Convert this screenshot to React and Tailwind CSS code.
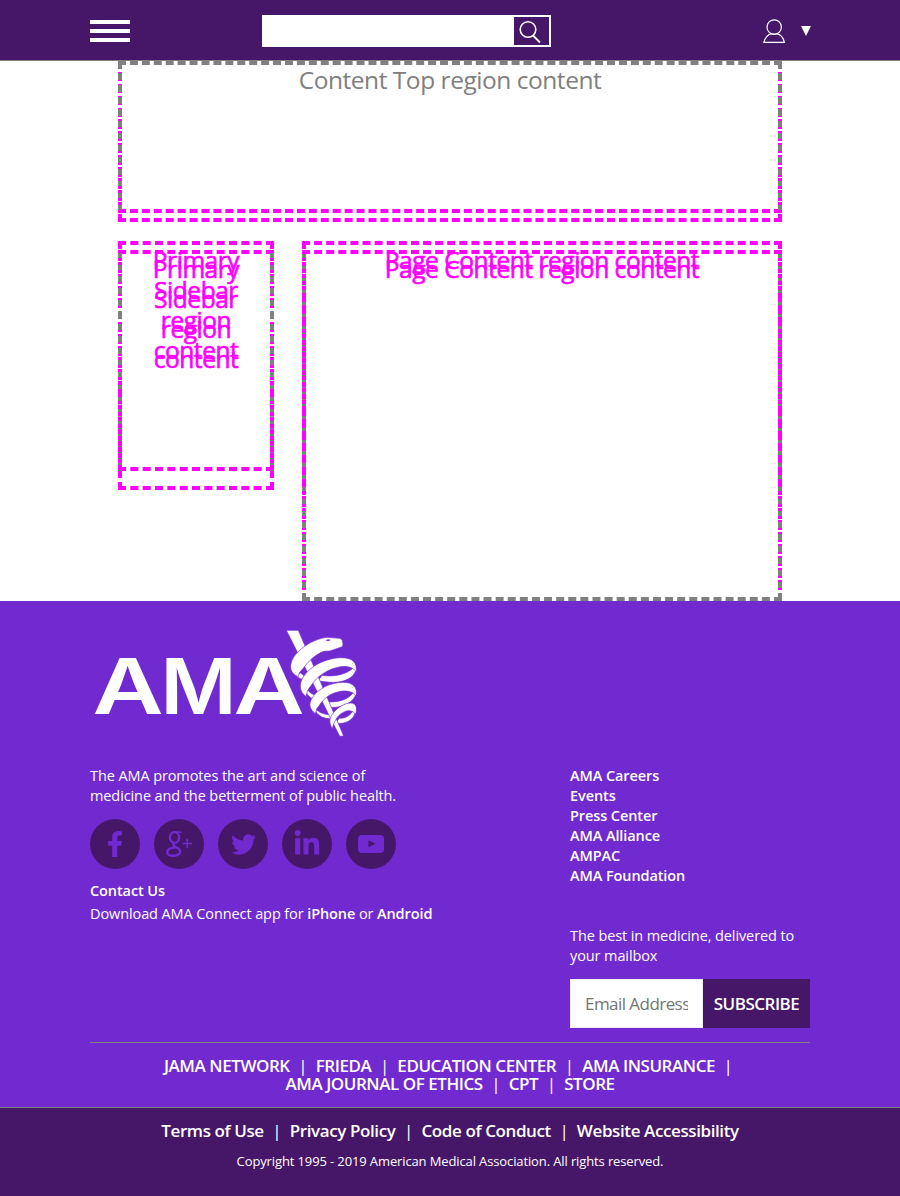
import React from "react";
import { FaFacebookF, FaTwitter, FaLinkedinIn } from "react-icons/fa";

const MAGENTA = "#ff00ff";

// Pitch of an evenly spread dashed line with 8px dashes.
function pitchOf(length) {
  const few = Math.floor((length + 4) / 12);
  const gapFew = (length - few * 8) / (few - 1);
  const gapMany = (length - (few + 1) * 8) / few;
  return 8 + (Math.abs(gapFew - 4) <= Math.abs(gapMany - 4) ? gapFew : gapMany);
}

// Share of the pixel row y that is covered by a dash of the line.
function coverage(y, [top, bottom]) {
  if (y < top || y >= bottom) return 0;
  const pitch = pitchOf(bottom - top);
  let sum = 0;
  for (let k = Math.floor((y - top) / pitch); k <= Math.floor((y + 1 - top) / pitch); k++) {
    const start = top + k * pitch;
    sum += Math.max(0, Math.min(y + 1, start + 8) - Math.max(y, start));
  }
  return Math.min(1, sum);
}

// Gradient for a vertical edge shared by two dashed boxes: gray where both
// agree, magenta where they differ.
function edgeGradient(a, b, height) {
  const stops = [];
  for (let y = 0; y < height; y++) {
    const ca = coverage(y, a);
    const cb = coverage(y, b);
    const color = Math.abs(ca - cb) > 0.12 ? MAGENTA : `rgba(128,128,128,${cb.toFixed(2)})`;
    stops.push(`${color} ${y}px ${y + 1}px`);
  }
  return `linear-gradient(${stops.join(",")})`;
}

function Edges({ a, b, height }) {
  const style = { backgroundImage: edgeGradient(a, b, height) };
  return (
    <>
      <div className="absolute inset-y-0 left-0 w-1" style={style} />
      <div className="absolute inset-y-0 right-0 w-1" style={style} />
    </>
  );
}

function Rule({ className }) {
  return <div className={`absolute inset-x-0 h-2 border-dashed ${className}`} />;
}

function GhostText({ children, className }) {
  return (
    <div className={`absolute inset-x-0 text-center text-[#ff00ff] [-webkit-text-stroke:0.6px_#ff00ff] ${className}`}>
      {children}
    </div>
  );
}

const REGION = "text-[24.5px] leading-[30px] tracking-[-0.46px]";

function Logo() {
  return (
    <svg className="block h-[115px] w-[275px]" viewBox="0 0 275 115" fill="#fff">
      <g fontFamily="Inter, sans-serif" fontWeight="600" fontSize="77">
        <text x="2.5" y="88.5" textLength="71" lengthAdjust="spacingAndGlyphs">A</text>
        <text x="70.5" y="88.5" textLength="76" lengthAdjust="spacingAndGlyphs">M</text>
        <text x="143.5" y="88.5" textLength="71" lengthAdjust="spacingAndGlyphs">A</text>
      </g>
      <g transform="translate(190 0) scale(0.33333)" stroke="#7129d0" strokeWidth="2">
        <path d="M46 146 L62 144 L82 160 Q60 168 46 150Z" />
        <path d="M228 130 C226 160 190 174 150 172 L114 168 L126 151 C160 156 200 150 222 126Z" />
        <path d="M76 200 Q90 224 114 226 L108 211 Q92 208 84 196Z" />
        <path d="M228 204 C224 233 185 250 148 247 L136 230 C170 233 205 226 222 200Z" />
        <path d="M104 256 Q120 282 154 282 L154 269 Q128 270 112 256Z" />
        <path d="M228 254 C224 288 190 300 168 294 L178 279 C195 282 212 272 222 252Z" />
        <path d="M19 16 L55 16 L191 333 L179 334Z" />
        <path d="M140 37 L180 40 Q189 43 189 58 L187 65 L150 78 L132 79 C106 88 84 110 68 132 Q54 144 55 155 C34 148 28 130 34 112 C42 82 90 44 140 37Z" />
        <path d="M79 215 C58 202 56 178 69 157 C90 122 140 98 185 98 C217 98 234 113 228 142 C222 128 205 123 183 125 C146 130 110 154 93 182 Q78 198 79 215Z" />
        <path d="M107 267 C88 252 86 238 95 221 C112 192 150 172 190 172 C219 172 234 187 228 214 C222 200 200 196 183 199 C154 204 132 218 119 240 Q106 252 107 267Z" />
        <path d="M157 311 C145 291 149 278 159 265 C172 247 195 234 212 234 C230 235 232 250 227 268 C218 256 205 255 194 260 C175 268 163 285 157 311Z" />
        <path d="M138 46 Q146 41 151 45 Q145 50 138 46Z" fill="#7129d0" strokeWidth="1" />
      </g>
    </svg>
  );
}

function Social({ children }) {
  return (
    <a className="flex size-[50px] items-center justify-center rounded-full bg-[#461669] text-[#7129d0]">{children}</a>
  );
}

function LinkRow({ items, trailing, className }) {
  return (
    <div className={`flex justify-center whitespace-nowrap leading-[18px] ${className}`}>
      {items.map((t, i) => (
        <React.Fragment key={t}>
          <a className="font-semibold">{t}</a>
          {(i < items.length - 1 || trailing) && <span className="w-[26px] text-center">|</span>}
        </React.Fragment>
      ))}
    </div>
  );
}

export default function App() {
  return (
    <div className="h-[1196px] w-[900px] overflow-hidden bg-white font-['Open_Sans','Noto_Sans',sans-serif]">
      <header className="flex h-[61px] border-b border-[#808080] bg-[#461669] pl-[90px]">
        <div className="mt-5 flex w-[172px] flex-col gap-[5px]">
          <div className="h-1 w-10 bg-white" />
          <div className="h-1 w-10 bg-white" />
          <div className="h-1 w-10 bg-white" />
        </div>
        <div className="mt-[15px] flex h-8 w-[289px] justify-end bg-white p-0.5">
          <div className="h-7 w-[35px] bg-[#461669]">
            <svg className="size-full" viewBox="0 0 35 28" fill="none" stroke="#fff" strokeWidth="1.6">
              <circle cx="14" cy="12.5" r="7.8" />
              <path d="M19 18.5 L26 25.5" strokeWidth="1.8" />
            </svg>
          </div>
        </div>
        <svg className="ml-[212px] mt-[19px] h-6 w-[22px]" viewBox="0 0 22 24" fill="none" stroke="#fff" strokeWidth="1.2">
          <circle cx="11.2" cy="8" r="7.2" />
          <path d="M0.8 23.3 C2 18.5 5.5 15 8 14.8 Q11 16 14.2 14.8 C17 15 20.5 18.5 21.4 23.3Z" />
        </svg>
        <svg className="ml-4 mt-[26px] h-2.5 w-2.5" viewBox="0 0 10 10" fill="#fff">
          <path d="M0 0H10L5 10Z" />
        </svg>
      </header>

      <main className="h-[540px] px-[118px]">
        <section className={`relative h-[161px] text-center text-[#808080] ${REGION}`}>
          <Rule className="top-0 border-t-4 border-[#808080]" />
          <Rule className="bottom-[9px] border-b-4 border-[#ff00ff]" />
          <Rule className="bottom-0 border-b-4 border-[#ff00ff]" />
          <Edges a={[0, 161]} b={[0, 152]} height={161} />
          <div className="pt-1">Content Top region content</div>
        </section>
        <div className="mt-[19px] flex justify-between">
          <section className={`relative h-[249px] w-[156px] ${REGION}`}>
            <Rule className="top-0 border-t-4 border-[#ff00ff]" />
            <Rule className="top-[9px] border-t-4 border-[#ff00ff]" />
            <Rule className="bottom-[19px] border-b-4 border-[#ff00ff]" />
            <Rule className="bottom-0 border-b-4 border-[#ff00ff]" />
            <Edges a={[0, 230]} b={[9, 249]} height={249} />
            <GhostText className="top-1">Primary<br />Sidebar<br />region<br />content</GhostText>
            <GhostText className="top-[13px]">Primary<br />Sidebar<br />region<br />content</GhostText>
          </section>
          <section className={`relative h-[360px] w-[480px] ${REGION}`}>
            <Rule className="top-0 border-t-4 border-[#ff00ff]" />
            <Rule className="top-[9px] border-t-4 border-[#ff00ff]" />
            <Rule className="bottom-0 border-b-4 border-[#808080]" />
            <Edges a={[0, 360]} b={[9, 360]} height={360} />
            <GhostText className="top-1">Page Content region content</GhostText>
            <GhostText className="top-[13px]">Page Content region content</GhostText>
          </section>
        </div>
      </main>

      <footer className="text-white">
        <div className="h-[506px] bg-[#7129d0] px-[90px] pt-6">
          <Logo />
          <div className="mt-[26px] flex h-[276px] justify-between text-[14.5px] leading-5 tracking-[-0.1px]">
            <div>
              <p className="whitespace-nowrap">The AMA promotes the art and science of<br />medicine and the betterment of public health.</p>
              <div className="mt-[13px] flex gap-3.5">
                <Social><FaFacebookF size={26} /></Social>
                <Social>
                  <svg className="h-[26px] w-7" viewBox="0 0 28 26" fill="none" stroke="#7129d0" strokeWidth="2.4">
                    <ellipse cx="9.5" cy="6.5" rx="4.6" ry="5.4" />
                    <path d="M10 1.1H16.5" strokeWidth="1.4" />
                    <path d="M10 11.5C7 13 8 14.5 11 16C14.5 17.8 16 19 15 21.5C13.5 25.2 4.5 26 2.5 22.5C1 19 5 16.5 10.5 16.5" />
                    <path d="M17.5 12.5H27M22.2 7.8V17.2" strokeWidth="1.7" />
                  </svg>
                </Social>
                <Social><FaTwitter size={25} /></Social>
                <Social><FaLinkedinIn size={28} /></Social>
                <Social>
                  <svg className="h-[18px] w-[26px]" viewBox="0 0 26 18">
                    <rect width="26" height="18" rx="4" fill="#7129d0" />
                    <path d="M10.5 5.2V12.2L17.5 8.7Z" fill="#461669" />
                  </svg>
                </Social>
              </div>
              <p className="mt-3 font-semibold">Contact Us</p>
              <p className="mt-[3px] whitespace-nowrap">Download AMA Connect app for <b className="font-semibold">iPhone</b> or <b className="font-semibold">Android</b></p>
            </div>
            <div className="w-60">
              <ul className="font-semibold">
                <li>AMA Careers</li>
                <li>Events</li>
                <li>Press Center</li>
                <li>AMA Alliance</li>
                <li>AMPAC</li>
                <li>AMA Foundation</li>
              </ul>
              <p className="mt-10 whitespace-nowrap">The best in medicine, delivered to<br />your mailbox</p>
              <div className="mt-[13px] flex h-[49px]">
                <div className="w-[133px] border border-[#eee] bg-white px-3.5">
                  <div className="overflow-hidden whitespace-nowrap text-[17px] leading-[48px] tracking-[-0.55px] text-[#757575]">Email Address</div>
                </div>
                <div className="flex-1 bg-[#461669] text-center text-[17px] font-semibold leading-[49px] tracking-[-0.5px]">SUBSCRIBE</div>
              </div>
            </div>
          </div>
          <div className="border-t border-[#808080] pt-3.5 text-[17px] tracking-[-0.45px]">
            <LinkRow items={["JAMA NETWORK", "FRIEDA", "EDUCATION CENTER", "AMA INSURANCE"]} trailing className="pl-[5px]" />
            <LinkRow items={["AMA JOURNAL OF ETHICS", "CPT", "STORE"]} className="" />
          </div>
        </div>
        <div className="h-[89px] border-t border-[#808080] bg-[#461669] pt-3.5 text-center">
          <LinkRow items={["Terms of Use", "Privacy Policy", "Code of Conduct", "Website Accessibility"]} className="text-[17px] tracking-[-0.4px]" />
          <p className="mt-[11px] text-[13px] leading-5 tracking-[-0.12px]">Copyright 1995 - 2019 American Medical Association. All rights reserved.</p>
        </div>
      </footer>
    </div>
  );
}
